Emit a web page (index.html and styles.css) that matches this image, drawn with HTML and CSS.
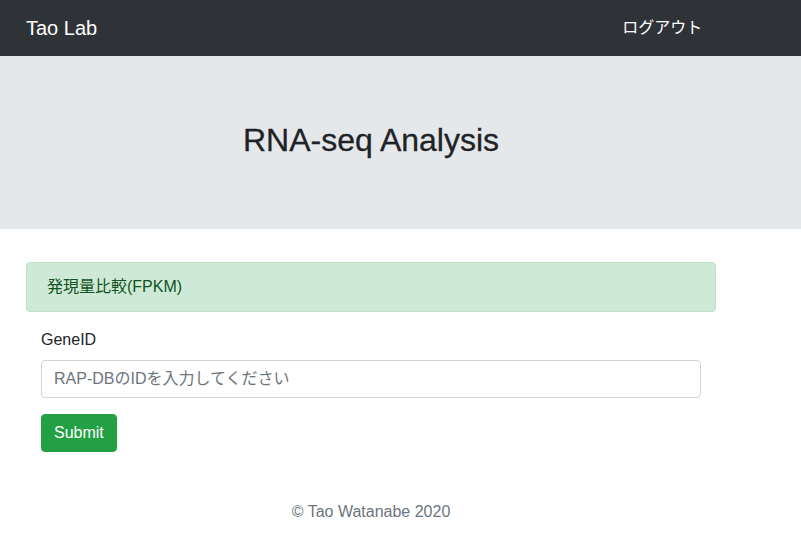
FILE: index.html
```html
<!DOCTYPE html>
<html lang="ja">
<head>
<meta charset="utf-8">
<title>RNA-seq Analysis</title>
<link rel="stylesheet" href="styles.css">
</head>
<body>
<nav class="navbar">
  <a class="brand" href="#">Tao Lab</a>
  <a class="nav-link" href="#">ログアウト</a>
</nav>
<div class="jumbotron">
  <div class="container">
    <h1 class="title">RNA-seq Analysis</h1>
  </div>
</div>
<main class="container">
  <div class="alert">発現量比較(FPKM)</div>
  <form class="form">
    <div class="form-group">
      <label class="label" for="gene">GeneID</label>
      <input class="input" id="gene" type="text" placeholder="RAP-DBのIDを入力してください">
    </div>
    <button class="btn" type="button">Submit</button>
  </form>
  <footer class="footer">© Tao Watanabe 2020</footer>
</main>
</body>
</html>
```

FILE: styles.css
```css
* { box-sizing: border-box; }
html, body {
  margin: 0;
  padding: 0;
  background: #fff;
  font-family: "Liberation Sans", "Noto Sans CJK JP", sans-serif;
  font-size: 16px;
  line-height: 1.5;
  color: #212529;
}
.navbar {
  display: flex;
  align-items: center;
  height: 56px;
  padding: 0 26px;
  background: #2f3338;
}
.brand {
  color: #fff;
  text-decoration: none;
  font-size: 20px;
  line-height: 30px;
}
.nav-link {
  color: #fff;
  text-decoration: none;
  font-size: 16px;
  margin-left: 525px;
}
.container {
  width: 690px;
  margin-left: 26px;
}
.jumbotron {
  background: #e5e8eb;
  padding: 65px 0 69px;
  margin-bottom: 33px;
}
.title {
  margin: 0;
  text-align: center;
  font-size: 32px;
  font-weight: 500;
  line-height: 39px;
  color: #1f2326;
  -webkit-text-stroke: 0.3px #1f2326;
}
.alert {
  background: #ceead6;
  border: 1px solid #bde3c6;
  color: #12521f;
  border-radius: 4px;
  padding: 12px 20px;
  margin-bottom: 16px;
}
.form {
  padding: 0 15px;
}
.form-group {
  margin-bottom: 16px;
}
.label {
  display: block;
  margin-bottom: 8px;
}
.input {
  display: block;
  width: 100%;
  height: 38px;
  padding: 6px 12px;
  font-family: inherit;
  font-size: 16px;
  color: #495057;
  border: 1px solid #ced4da;
  border-radius: 4px;
  background: #fff;
}
.input::placeholder { color: #6c757d; }
.btn {
  height: 38px;
  padding: 6px 12px;
  font-family: inherit;
  font-size: 16px;
  color: #fff;
  background: #23a043;
  border: 1px solid #23a043;
  border-radius: 4px;
}
.footer {
  margin-top: 48px;
  text-align: center;
  color: #6c757d;
}
```
